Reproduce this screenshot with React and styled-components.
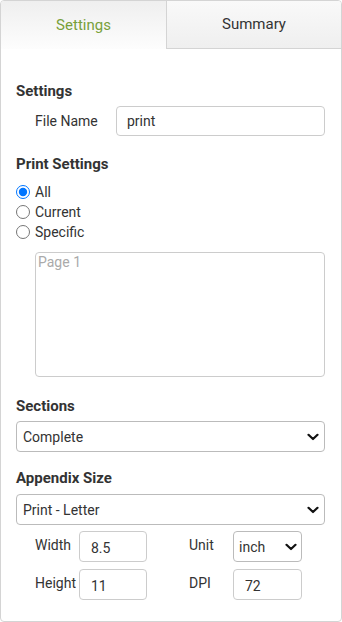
import styled, { createGlobalStyle } from "styled-components"
import { useState } from "react"

const GlobalStyle = createGlobalStyle`
    * { box-sizing: border-box; }
    body {
        margin: 0;
        background: #fff;
        font-family: Roboto, "Liberation Sans", Arial, sans-serif;
        font-size: 14px;
        color: #333;
    }
`

const Panel = styled.div`
    width: 342px;
    height: 622px;
    border: 1px solid #d4d4d4;
    border-radius: 4px;
    overflow: hidden;
    display: flex;
    flex-direction: column;
`

const Tabs = styled.div`
    display: grid;
    grid-template-columns: 165px 1fr;
    height: 48px;
`

const Tab = styled.button`
    border: none;
    font-family: inherit;
    font-size: 15px;
    padding: 0 0 1px;
    cursor: pointer;
    color: ${({ active }) => active ? "#78a03a" : "#333"};
    background: ${({ active }) => active
        ? "linear-gradient(#efefef, #fdfdfd)"
        : "linear-gradient(#f9f9f9, #efefef)"};
    border-bottom: ${({ active }) => active ? "none" : "1px solid #d4d4d4"};
    border-left: ${({ active }) => active ? "none" : "1px solid #d4d4d4"};
`

const Body = styled.div`
    padding: 34px 16px 0 15px;
    display: flex;
    flex-direction: column;
`

const Heading = styled.div`
    font-weight: 700;
    font-size: 15px;
    line-height: 16px;
    color: #333;
    margin-bottom: ${({ mb }) => mb || 6}px;
`

const FieldRow = styled.div`
    display: flex;
    align-items: center;
    padding-left: 19px;
    margin-bottom: 20px;
`

const Label = styled.label`
    font-size: 14px;
    color: #333;
    width: ${({ w }) => w}px;
    flex-shrink: 0;
`

const TextInput = styled.input`
    height: ${({ h }) => h || 30}px;
    width: ${({ w }) => w ? `${w}px` : "100%"};
    border: 1px solid #ccc;
    border-radius: 4px;
    padding: 0 ${({ px }) => px || 10}px;
    padding-top: ${({ pt }) => pt || 0}px;
    font-family: inherit;
    font-size: 14px;
    color: #333;
    outline: none;
`

const RadioList = styled.div`
    display: flex;
    flex-direction: column;
    gap: 2px;
    margin-top: -1px;
    margin-bottom: 11px;
`

const RadioLabel = styled.label`
    display: flex;
    align-items: center;
    height: 18px;
    font-size: 14px;
    color: #333;

    input {
        margin: 0 5px 0 0;
        width: 14px;
        height: 14px;
    }
`

const PageArea = styled.textarea`
    margin-left: 19px;
    height: 125px;
    border: 1px solid #ccc;
    border-radius: 4px;
    resize: none;
    font-family: inherit;
    font-size: 14px;
    padding: 1px 2px;
    color: #333;
    margin-bottom: 21px;
    outline: none;

    &::placeholder {
        color: #aaa;
    }
`

const SelectWrap = styled.div`
    position: relative;
    width: ${({ w }) => w ? `${w}px` : "100%"};
    margin-bottom: ${({ mb }) => mb || 0}px;

    svg {
        position: absolute;
        right: ${({ arrowRight }) => arrowRight || 6}px;
        top: 50%;
        margin-top: -4px;
        pointer-events: none;
    }
`

const Select = styled.select`
    appearance: none;
    display: block;
    height: ${({ h }) => h || 31}px;
    width: 100%;
    border: 1px solid #bbb;
    border-radius: 4px;
    font-family: inherit;
    font-size: 14px;
    color: #333;
    background: #fff;
    padding: 0 24px 0 ${({ pl }) => pl || 6}px;
    outline: none;
`

const Chevron = () => (
    <svg width="12" height="8" viewBox="0 0 12 8">
        <path d="M1.5 1.8 L6 6 L10.5 1.8" fill="none" stroke="#111" strokeWidth="2.2" strokeLinecap="round" strokeLinejoin="round" />
    </svg>
)

const Dropdown = ({ value, w, mb, pl, arrowRight }) => (
    <SelectWrap w={w} mb={mb} arrowRight={arrowRight}>
        <Select pl={pl} defaultValue={value}>
            <option>{value}</option>
        </Select>
        <Chevron />
    </SelectWrap>
)

const SizeRows = styled.div`
    display: flex;
    flex-direction: column;
    gap: 7px;
    padding-left: 19px;
    margin-top: 6px;
`

const SizeRow = styled.div`
    display: flex;
    align-items: flex-start;
`

const SizeLabel = styled.span`
    font-size: 14px;
    color: #333;
    width: 44px;
    padding-top: 6px;
    margin-left: ${({ ml }) => ml || 0}px;
`

const App = () => {
    const [tab, setTab] = useState("settings")
    const [range, setRange] = useState("all")

    return (
        <>
            <GlobalStyle />
            <Panel>
                <Tabs>
                    <Tab active={tab === "settings"} onClick={() => setTab("settings")}>Settings</Tab>
                    <Tab active={tab === "summary"} onClick={() => setTab("summary")}>Summary</Tab>
                </Tabs>
                <Body>
                    <Heading mb={7}>Settings</Heading>
                    <FieldRow>
                        <Label w={81}>File Name</Label>
                        <TextInput defaultValue="print" />
                    </FieldRow>

                    <Heading mb={12}>Print Settings</Heading>
                    <RadioList>
                        {[["all", "All"], ["current", "Current"], ["specific", "Specific"]].map(([key, text]) => (
                            <RadioLabel key={key}>
                                <input type="radio" name="range" checked={range === key} onChange={() => setRange(key)} />
                                {text}
                            </RadioLabel>
                        ))}
                    </RadioList>
                    <PageArea placeholder="Page 1" />

                    <Heading mb={7}>Sections</Heading>
                    <Dropdown value="Complete" mb={18} />

                    <Heading mb={8}>Appendix Size</Heading>
                    <Dropdown value="Print - Letter" />

                    <SizeRows>
                        <SizeRow>
                            <SizeLabel>Width</SizeLabel>
                            <TextInput w={68} h={31} px={11} pt={2} defaultValue="8.5" />
                            <SizeLabel ml={42}>Unit</SizeLabel>
                            <Dropdown value="inch" w={69} pl={5} arrowRight={5} />
                        </SizeRow>
                        <SizeRow>
                            <SizeLabel>Height</SizeLabel>
                            <TextInput w={68} h={31} px={11} pt={2} defaultValue="11" />
                            <SizeLabel ml={42}>DPI</SizeLabel>
                            <TextInput w={69} h={31} px={11} pt={2} defaultValue="72" />
                        </SizeRow>
                    </SizeRows>
                </Body>
            </Panel>
        </>
    )
}

export default App
